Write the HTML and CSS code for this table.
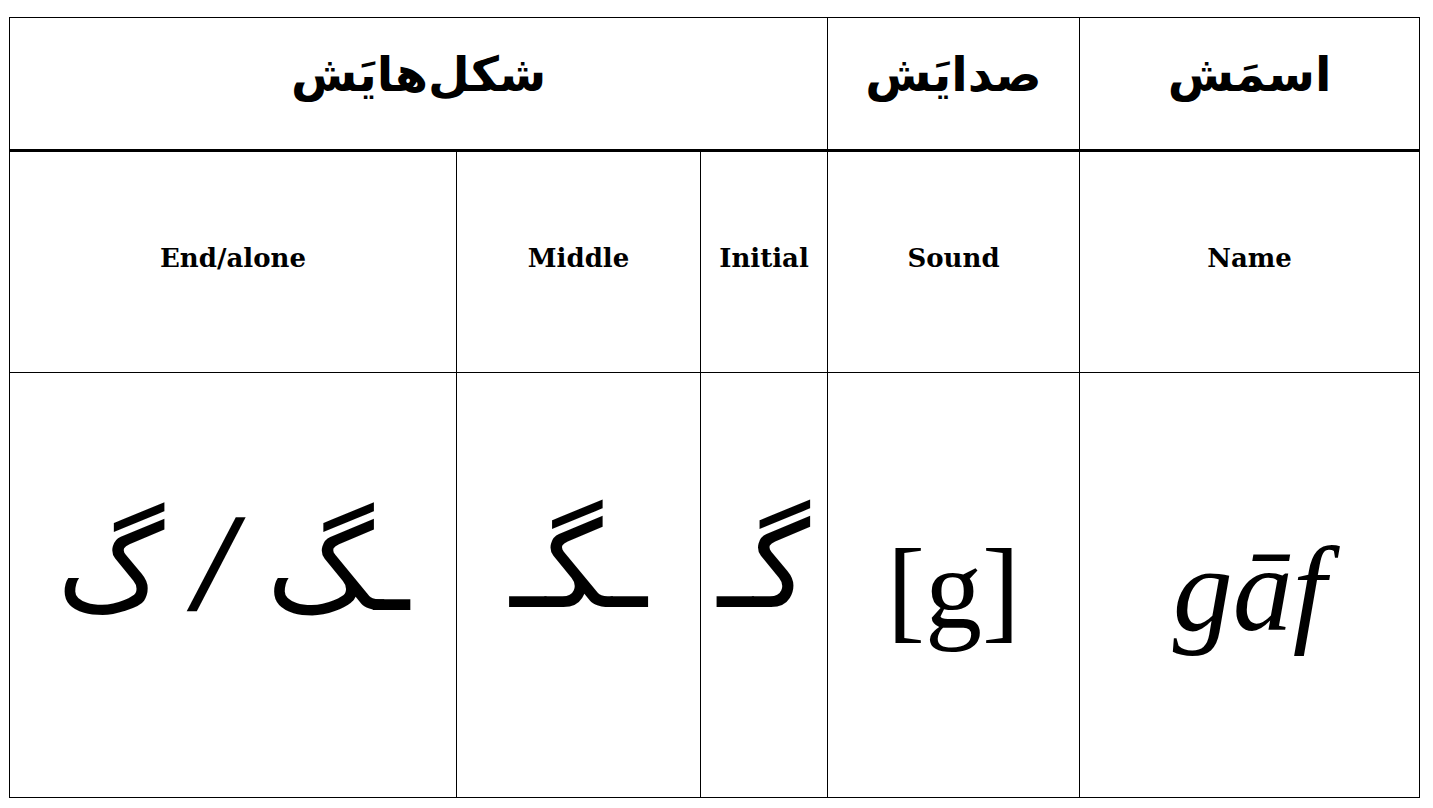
FILE: index.html
```html
<!DOCTYPE html>
<html lang="en">
<head>
<meta charset="utf-8">
<title>گاف</title>
<link rel="stylesheet" href="styles.css">
</head>
<body>
<table class="letter-table" dir="rtl">
  <colgroup>
    <col class="c-name">
    <col class="c-sound">
    <col class="c-initial">
    <col class="c-middle">
    <col class="c-end">
  </colgroup>
  <tr class="row-head">
    <th class="fa-head" lang="fa">اسمَش</th>
    <th class="fa-head" lang="fa">صدایَش</th>
    <th class="fa-head" lang="fa" colspan="3">شکل‌هایَش</th>
  </tr>
  <tr class="row-label">
    <td class="en-label" dir="ltr">Name</td>
    <td class="en-label" dir="ltr">Sound</td>
    <td class="en-label" dir="ltr">Initial</td>
    <td class="en-label" dir="ltr">Middle</td>
    <td class="en-label" dir="ltr">End/alone</td>
  </tr>
  <tr class="row-body">
    <td class="latin big italic" dir="ltr">gāf</td>
    <td class="latin big" dir="ltr">[g]</td>
    <td class="fa-big" lang="fa">گـ</td>
    <td class="fa-big" lang="fa">ـگـ</td>
    <td class="fa-big" lang="fa">ـگ <span class="slash">/</span> گ</td>
  </tr>
</table>
</body>
</html>
```

FILE: styles.css
```css
html, body {
  margin: 0;
  padding: 0;
  background: #fff;
  color: #000;
}
body {
  padding: 17px 0 0 9px;
}
.letter-table {
  border-collapse: collapse;
  table-layout: fixed;
  width: 1410px;
}
.c-name { width: 340px; }
.c-sound { width: 252px; }
.c-initial { width: 127px; }
.c-middle { width: 244px; }
.c-end { width: 447px; }

.letter-table th,
.letter-table td {
  border: 1px solid #000;
  padding: 0;
  text-align: center;
  vertical-align: middle;
}
.row-head th {
  height: 111px;
  border-bottom: 3px solid #000;
}
.row-label td { height: 212px; }
.row-body td { height: 384px; }

.letter-table .fa-head {
  font-family: "DejaVu Sans", sans-serif;
  font-weight: bold;
  font-size: 48px;
  padding-bottom: 20px;
}
.letter-table .en-label {
  font-family: "DejaVu Serif", serif;
  font-weight: bold;
  font-size: 26px;
  padding-bottom: 8px;
}
.letter-table .fa-big {
  font-family: "Liberation Sans", "DejaVu Sans", sans-serif;
  font-size: 120px;
  padding-bottom: 40px;
}
.slash {
  display: inline-block;
  font-size: 128px;
  transform: skewX(-14deg);
}
.letter-table .latin.big {
  font-family: "Liberation Serif", "Times New Roman", serif;
  font-size: 114px;
  padding-top: 10px;
}
.letter-table .latin.big.italic {
  font-style: italic;
  font-size: 120px;
}
```
